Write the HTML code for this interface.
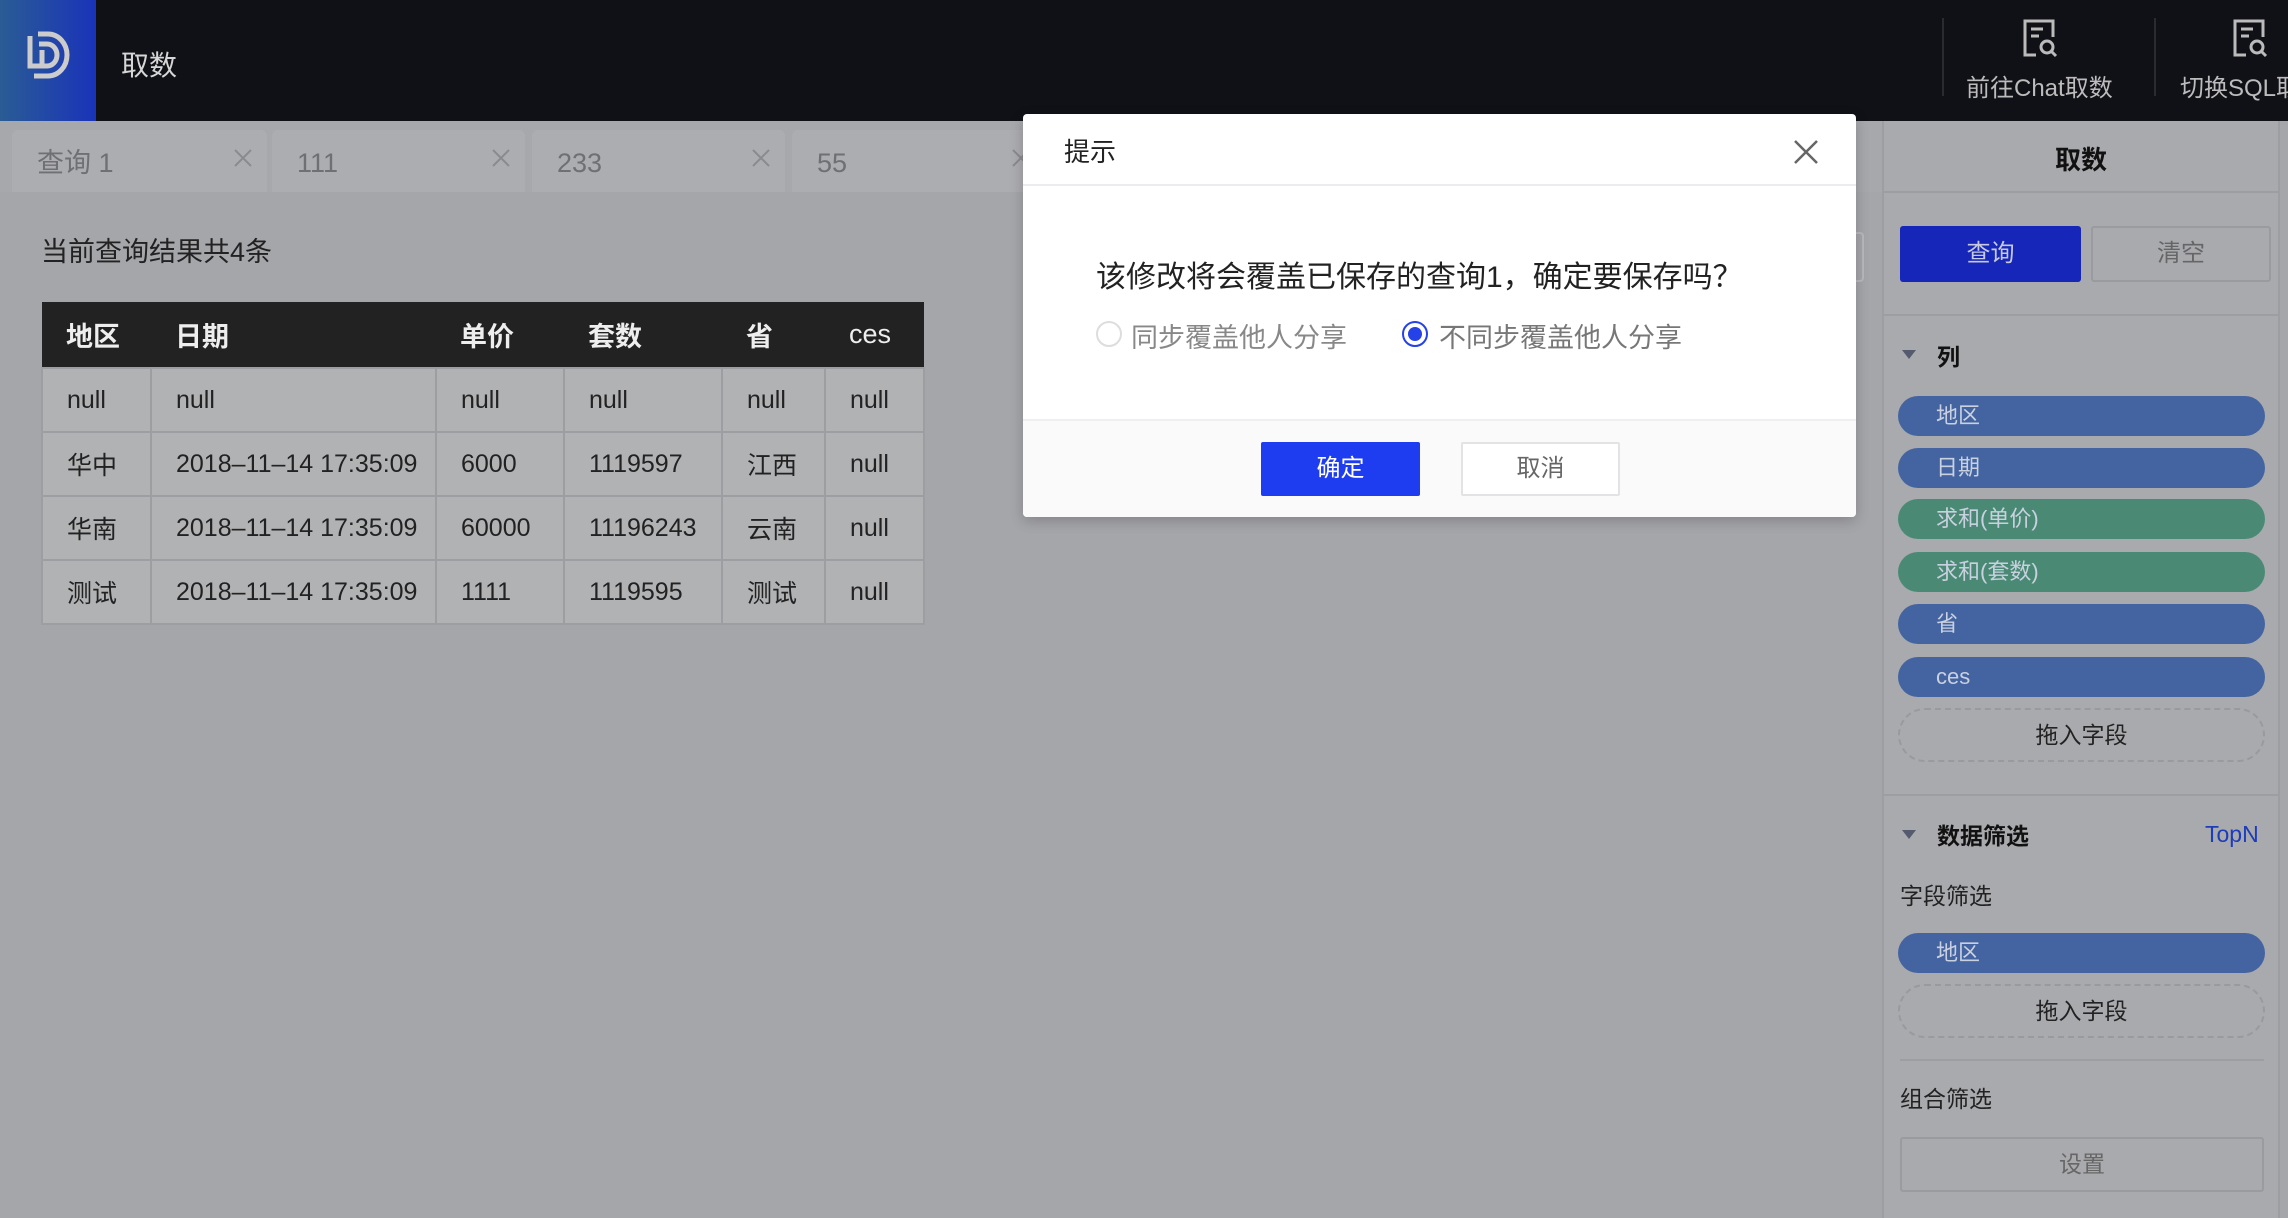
<!DOCTYPE html>
<html><head><meta charset="utf-8"><style>
*{box-sizing:border-box;margin:0;padding:0}
body{width:2288px;height:1218px;overflow:hidden;background:#a5a6aa;font-family:"Liberation Sans","Noto Sans CJK SC",sans-serif;position:relative}
.a{position:absolute}
.hdr{left:0;top:0;width:2288px;height:121px;background:#101117}
.logo{left:0;top:0;width:96px;height:121px;background:linear-gradient(90deg,#2a5c94,#1a33ba)}
.tab{top:130px;height:62px;background:#acadb1;border-radius:6px 6px 0 0;color:#6f7074;font-size:27px;line-height:66px;padding-left:25px}
.tab svg{position:absolute;right:14px;top:18px}
table{border-collapse:collapse;font-size:25px;color:#222}
td,th{border:2px solid #9d9ea1;height:64px;padding-left:24px;text-align:left}
th{background:#222;color:#eee;font-weight:bold;font-size:27px;border:none;height:66px}
td{background:#b1b2b4}
.pill{left:1898px;width:367px;height:40px;border-radius:20px;background:#4364a0;color:#c9d1e0;font-size:22px;line-height:40px;padding-left:38px}
.g{background:#4a8a74}
.dash{left:1898px;width:367px;height:54px;border:2px dashed #999a9e;border-radius:27px;text-align:center;line-height:50px;font-size:23px;color:#222}
.hl{height:2px;background:#9d9ea2}
</style></head><body>
<div class="a hdr"></div>
<div class="a logo"><svg class="a" style="left:26px;top:30px" width="44" height="50" viewBox="0 0 44 50"><path d="M4 6v30h12" fill="none" stroke="#ccc" stroke-width="5"/><path d="M12 4h10a19 21 0 0 1 0 42H8" fill="none" stroke="#ccc" stroke-width="5"/><path d="M13 14h8a10 11 0 0 1 0 22h-5V20" fill="none" stroke="#ccc" stroke-width="5"/></svg></div>
<div class="a" style="left:121px;top:44px;font-size:28px;color:#d6d6d6">取数</div>
<div class="a" style="left:1942px;top:18px;width:2px;height:78px;background:#2a2b30"></div>
<div class="a" style="left:2154px;top:18px;width:2px;height:78px;background:#2a2b30"></div>
<svg class="a" style="left:2022px;top:18px" width="40" height="42" viewBox="0 0 40 42"><path d="M14 37H3V3h28v16" fill="none" stroke="#bbb" stroke-width="3"/><path d="M9 11h12M9 18h8" stroke="#bbb" stroke-width="3"/><circle cx="25" cy="29" r="6" fill="none" stroke="#bbb" stroke-width="3"/><path d="M29 33l5 5" stroke="#bbb" stroke-width="3"/></svg>
<svg class="a" style="left:2232px;top:18px" width="40" height="42" viewBox="0 0 40 42"><path d="M14 37H3V3h28v16" fill="none" stroke="#bbb" stroke-width="3"/><path d="M9 11h12M9 18h8" stroke="#bbb" stroke-width="3"/><circle cx="25" cy="29" r="6" fill="none" stroke="#bbb" stroke-width="3"/><path d="M29 33l5 5" stroke="#bbb" stroke-width="3"/></svg>
<div class="a" style="left:1966px;top:68px;font-size:24px;color:#bcbcbc;white-space:nowrap">前往Chat取数</div>
<div class="a" style="left:2180px;top:68px;font-size:24px;color:#bcbcbc;white-space:nowrap">切换SQL取数</div>

<div class="a" style="left:0;top:121px;width:1882px;height:71px;background:#a7a8ac"></div>
<div class="a tab" style="left:12px;width:255px">查询 1<svg width="20" height="20" viewBox="0 0 20 20"><path d="M2 2l16 16M18 2L2 18" stroke="#8a8b8f" stroke-width="2"/></svg></div>
<div class="a tab" style="left:272px;width:253px">111<svg width="20" height="20" viewBox="0 0 20 20"><path d="M2 2l16 16M18 2L2 18" stroke="#8a8b8f" stroke-width="2"/></svg></div>
<div class="a tab" style="left:532px;width:253px">233<svg width="20" height="20" viewBox="0 0 20 20"><path d="M2 2l16 16M18 2L2 18" stroke="#8a8b8f" stroke-width="2"/></svg></div>
<div class="a tab" style="left:792px;width:253px">55<svg width="20" height="20" viewBox="0 0 20 20"><path d="M2 2l16 16M18 2L2 18" stroke="#8a8b8f" stroke-width="2"/></svg></div>

<div class="a" style="left:41px;top:230px;font-size:27px;color:#222">当前查询结果共4条</div>
<table class="a" style="left:41px;top:302px;width:884px">
<tr><th style="width:109px">地区</th><th style="width:285px">日期</th><th style="width:128px">单价</th><th style="width:158px">套数</th><th style="width:103px">省</th><th style="font-weight:normal">ces</th></tr>
<tr><td>null</td><td>null</td><td>null</td><td>null</td><td>null</td><td>null</td></tr>
<tr><td>华中</td><td>2018–11–14 17:35:09</td><td>6000</td><td>1119597</td><td>江西</td><td>null</td></tr>
<tr><td>华南</td><td>2018–11–14 17:35:09</td><td>60000</td><td>11196243</td><td>云南</td><td>null</td></tr>
<tr><td>测试</td><td>2018–11–14 17:35:09</td><td>1111</td><td>1119595</td><td>测试</td><td>null</td></tr>
</table>

<div class="a" style="left:1882px;top:121px;width:398px;height:1097px;background:#a9aaae;border-left:2px solid #9d9ea2;border-right:2px solid #9d9ea2"></div>
<div class="a" style="left:1882px;top:140px;width:398px;text-align:center;font-size:26px;font-weight:bold;color:#111">取数</div>
<div class="a hl" style="left:1882px;top:191px;width:398px"></div>
<div class="a" style="left:1900px;top:226px;width:181px;height:56px;background:#1526b8;border-radius:3px;color:#c5cae0;font-size:24px;text-align:center;line-height:56px">查询</div>
<div class="a" style="left:2091px;top:226px;width:180px;height:56px;border:2px solid #9a9b9f;border-radius:3px;color:#666;font-size:24px;text-align:center;line-height:52px">清空</div>
<div class="a hl" style="left:1882px;top:314px;width:398px"></div>
<div class="a" style="left:1902px;top:350px;width:0;height:0;border-left:7px solid transparent;border-right:7px solid transparent;border-top:9px solid #555a6e"></div>
<div class="a" style="left:1937px;top:338px;font-size:23px;font-weight:bold;color:#111">列</div>
<div class="a pill" style="top:396px">地区</div>
<div class="a pill" style="top:448px">日期</div>
<div class="a pill g" style="top:499px">求和(单价)</div>
<div class="a pill g" style="top:552px">求和(套数)</div>
<div class="a pill" style="top:604px">省</div>
<div class="a pill" style="top:657px">ces</div>
<div class="a dash" style="top:708px">拖入字段</div>
<div class="a hl" style="left:1882px;top:794px;width:398px"></div>
<div class="a" style="left:1902px;top:830px;width:0;height:0;border-left:7px solid transparent;border-right:7px solid transparent;border-top:9px solid #555a6e"></div>
<div class="a" style="left:1937px;top:817px;font-size:23px;font-weight:bold;color:#111">数据筛选</div>
<div class="a" style="left:2205px;top:821px;font-size:23px;color:#1d3cb8">TopN</div>
<div class="a" style="left:1900px;top:877px;font-size:23px;color:#222">字段筛选</div>
<div class="a pill" style="top:933px">地区</div>
<div class="a dash" style="top:984px">拖入字段</div>
<div class="a hl" style="left:1900px;top:1059px;width:364px"></div>
<div class="a" style="left:1900px;top:1080px;font-size:23px;color:#222">组合筛选</div>
<div class="a" style="left:1900px;top:1137px;width:364px;height:55px;border:2px solid #9a9b9f;border-radius:3px;color:#666;font-size:23px;text-align:center;line-height:51px">设置</div>

<div class="a" style="left:1850px;top:232px;width:14px;height:50px;border:2px solid #b8b9bc;border-left:none;border-radius:0 4px 4px 0"></div>

<div class="a" style="left:1023px;top:114px;width:833px;height:403px;background:#fff;border-radius:4px;box-shadow:0 4px 14px rgba(0,0,0,.2);overflow:hidden">
<div class="a" style="left:41px;top:18px;font-size:26px;color:#222">提示</div>
<svg class="a" style="left:770px;top:25px" width="26" height="26" viewBox="0 0 26 26"><path d="M2 2l22 22M24 2L2 24" stroke="#666" stroke-width="2.5"/></svg>
<div class="a" style="left:0;top:70px;width:833px;height:2px;background:#ebecf0"></div>
<div class="a" style="left:73px;top:138px;font-size:30px;color:#222;white-space:nowrap">该修改将会覆盖已保存的查询1，确定要保存吗？</div>
<div class="a" style="left:73px;top:207px;width:26px;height:26px;border:2px solid #ddd;border-radius:50%"></div>
<div class="a" style="left:108px;top:202px;font-size:27px;color:#888">同步覆盖他人分享</div>
<div class="a" style="left:379px;top:207px;width:26px;height:26px;border:2px solid #2442e8;border-radius:50%"><div class="a" style="left:4px;top:4px;width:14px;height:14px;background:#2442e8;border-radius:50%"></div></div>
<div class="a" style="left:416px;top:202px;font-size:27px;color:#777">不同步覆盖他人分享</div>
<div class="a" style="left:0;top:305px;width:833px;height:98px;background:#fafafa;border-top:2px solid #eeeff2"></div>
<div class="a" style="left:238px;top:328px;width:159px;height:54px;background:#1e3df0;border-radius:2px;color:#fff;font-size:24px;text-align:center;line-height:54px">确定</div>
<div class="a" style="left:438px;top:328px;width:159px;height:54px;background:#fff;border:2px solid #e3e3e6;border-radius:2px;color:#666;font-size:24px;text-align:center;line-height:50px">取消</div>
</div>
</body></html>
